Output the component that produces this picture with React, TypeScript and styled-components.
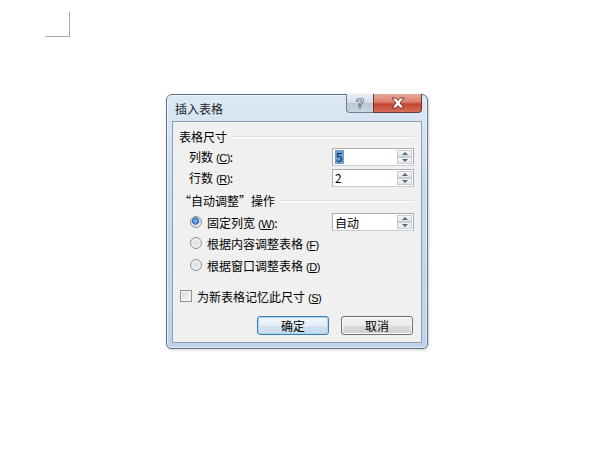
import styled, { createGlobalStyle } from "styled-components";

const GlobalStyle = createGlobalStyle`
  html, body {
    margin: 0;
    padding: 0;
    background: #ffffff;
  }
  body {
    font-family: "Noto Sans CJK SC", "Liberation Sans", sans-serif;
    font-size: 12px;
    color: #000;
  }
`;

function SpinBox({ value, selected }: { value: string; selected?: boolean }) {
  return (
    <Spin>
      <SpinText>{selected ? <Selected>{value}</Selected> : value}</SpinText>
      <SpinButtons>
        <SpinButton>
          <Arrow $dir="up" />
        </SpinButton>
        <SpinButton>
          <Arrow $dir="down" />
        </SpinButton>
      </SpinButtons>
    </Spin>
  );
}

function CloseGlyph() {
  return (
    <svg width="16" height="12" viewBox="0 0 16 12">
      <path
        d="M2 1 L6 1 L8 3.5 L10 1 L14 1 L10 6 L14 11 L10 11 L8 8.5 L6 11 L2 11 L6 6 Z"
        fill="#ffffff"
        stroke="#6b2a22"
        strokeWidth="0.9"
        strokeLinejoin="round"
      />
    </svg>
  );
}

export default function App() {
  return (
    <>
      <GlobalStyle />
      <Page>
        <CornerMark />
        <Window>
          <TitleBar>
            <Title>插入表格</Title>
            <Controls>
              <HelpButton>?</HelpButton>
              <CloseButton>
                <CloseGlyph />
              </CloseButton>
            </Controls>
          </TitleBar>
          <Client>
            <GroupHeader $h={20} $top={4}>
              表格尺寸
              <Rule />
            </GroupHeader>
            <FieldRow $h={21}>
              <Label>
                列数<Key>(<u>C</u>)</Key>:
              </Label>
              <SpinBox value="5" selected />
            </FieldRow>
            <FieldRow $h={21}>
              <Label>
                行数<Key>(<u>R</u>)</Key>:
              </Label>
              <SpinBox value="2" />
            </FieldRow>
            <GroupHeader $h={25}>
              “自动调整”操作
              <Rule />
            </GroupHeader>
            <FieldRow $h={18}>
              <Option>
                <Radio $checked />
                <span>
                  固定列宽<Key>(<u>W</u>)</Key>:
                </span>
              </Option>
              <SpinBox value="自动" />
            </FieldRow>
            <FieldRow $h={24}>
              <Option>
                <Radio />
                <span>
                  根据内容调整表格<Key>(<u>F</u>)</Key>
                </span>
              </Option>
            </FieldRow>
            <FieldRow $h={20}>
              <Option>
                <Radio />
                <span>
                  根据窗口调整表格<Key>(<u>D</u>)</Key>
                </span>
              </Option>
            </FieldRow>
            <CheckRow>
              <CheckBox />
              <span>
                为新表格记忆此尺寸<Key>(<u>S</u>)</Key>
              </span>
            </CheckRow>
            <ButtonRow>
              <PushButton $default>确定</PushButton>
              <PushButton>取消</PushButton>
            </ButtonRow>
          </Client>
        </Window>
      </Page>
    </>
  );
}

const Page = styled.div`
  position: relative;
  width: 600px;
  height: 450px;
  padding: 12px 0 0 45px;
  box-sizing: border-box;
  overflow: hidden;
`;

const CornerMark = styled.div`
  width: 24px;
  height: 24px;
  border-right: 1px solid #a8a8a8;
  border-bottom: 1px solid #a8a8a8;
`;

const Window = styled.div`
  position: absolute;
  left: 166px;
  top: 94px;
  width: 262px;
  height: 255px;
  box-sizing: border-box;
  display: flex;
  flex-direction: column;
  padding: 0 5px 5px 5px;
  border: 1px solid #5f7189;
  border-radius: 6px 6px 5px 5px;
  background: linear-gradient(180deg, #dce8f5 0%, #c8daee 40%, #bfd3ea 100%);
  box-shadow: inset 0 0 0 1px rgba(255, 255, 255, 0.55),
    1px 1px 3px rgba(0, 0, 0, 0.18);
`;

const TitleBar = styled.div`
  height: 26px;
  display: flex;
  align-items: center;
  justify-content: space-between;
`;

const Title = styled.span`
  margin-left: 3px;
  margin-top: 1px;
  font-size: 12px;
  color: #1e1e1e;
`;

const Controls = styled.div`
  align-self: flex-start;
  display: flex;
  margin-top: -1px;
`;

const HelpButton = styled.div`
  width: 27px;
  height: 19px;
  box-sizing: border-box;
  display: flex;
  align-items: center;
  justify-content: center;
  border: 1px solid #6f7f94;
  border-top: none;
  border-right: none;
  border-radius: 0 0 0 4px;
  background: linear-gradient(180deg, #e9eef4 0%, #d5dde7 50%, #b9c6d5 51%, #c9d5e2 100%);
  color: #ffffff;
  font-family: "Liberation Sans", sans-serif;
  font-size: 14px;
  font-weight: bold;
  -webkit-text-stroke: 0.7px #4a5a70;
`;

const CloseButton = styled.div`
  width: 49px;
  height: 19px;
  box-sizing: border-box;
  display: flex;
  align-items: center;
  justify-content: center;
  border: 1px solid #6a3a35;
  border-top: none;
  border-radius: 0 0 4px 0;
  background: linear-gradient(180deg, #e9a99c 0%, #dc7f6e 45%, #c6452f 55%, #d5705a 100%);
`;

const Client = styled.div`
  flex: 1;
  display: flex;
  flex-direction: column;
  padding: 0 7px 0 6px;
  border: 1px solid #8ea0b6;
  background: #f0f0f0;
`;

const GroupHeader = styled.div<{ $h: number; $top?: number }>`
  height: ${(p) => p.$h}px;
  margin-top: ${(p) => p.$top ?? 0}px;
  display: flex;
  align-items: center;
  gap: 5px;
  color: #000;
`;

const Rule = styled.div`
  flex: 1;
  height: 1px;
  background: #d5dfe5;
  box-shadow: 0 1px 0 #ffffff;
`;

const FieldRow = styled.div<{ $h: number }>`
  height: ${(p) => p.$h}px;
  display: flex;
  align-items: center;
  justify-content: space-between;
`;

const Label = styled.span`
  padding-left: 10px;
`;

const Key = styled.span`
  margin-left: 3px;
  font-family: "Liberation Sans", sans-serif;
  font-size: 11px;
  letter-spacing: -0.5px;
`;

const Option = styled.span`
  display: flex;
  align-items: center;
  gap: 5px;
  padding-left: 11px;
`;

const Radio = styled.span<{ $checked?: boolean }>`
  width: 12px;
  height: 12px;
  box-sizing: border-box;
  border-radius: 50%;
  border: 1px solid #8e8f8f;
  background: ${(p) =>
    p.$checked
      ? "radial-gradient(circle at 45% 40%, #8cc3f0 0%, #2d6fb5 42%, #d9dee4 48%, #f5f5f5 100%)"
      : "radial-gradient(circle at 50% 50%, #dcdcdc 0%, #eeeeee 55%, #f9f9f9 100%)"};
`;

const CheckRow = styled.div`
  height: 20px;
  margin-top: 11px;
  display: flex;
  align-items: center;
  gap: 5px;
  padding-left: 1px;
`;

const CheckBox = styled.span`
  width: 12px;
  height: 12px;
  box-sizing: border-box;
  border: 1px solid #8f8f8f;
  background: linear-gradient(135deg, #d8d8d8 0%, #ececec 60%, #f7f7f7 100%);
  box-shadow: inset 0 0 0 1px #f4f4f4;
`;

const ButtonRow = styled.div`
  margin-top: 10px;
  display: flex;
  justify-content: flex-end;
  gap: 12px;
  padding-right: 1px;
`;

const PushButton = styled.div<{ $default?: boolean }>`
  width: 72px;
  height: 19px;
  box-sizing: border-box;
  display: flex;
  align-items: center;
  justify-content: center;
  border: 1px solid ${(p) => (p.$default ? "#3c7fb1" : "#707070")};
  border-radius: 3px;
  background: ${(p) =>
    p.$default
      ? "linear-gradient(180deg, #f2f7fb 0%, #e5eff7 50%, #d2e3f1 51%, #c9dcec 100%)"
      : "linear-gradient(180deg, #f2f2f2 0%, #ebebeb 50%, #dddddd 51%, #cfcfcf 100%)"};
  box-shadow: inset 0 0 0 1px ${(p) => (p.$default ? "#a8d8f0" : "#fbfbfb")};
  color: #000;
`;

const Spin = styled.div`
  width: 82px;
  height: 18px;
  box-sizing: border-box;
  display: flex;
  border: 1px solid #abadb3;
  border-bottom-color: #c9ccd2;
  background: #ffffff;
`;

const SpinText = styled.div`
  flex: 1;
  display: flex;
  align-items: center;
  padding-left: 2px;
  font-size: 12px;
`;

const Selected = styled.span`
  background: #6c9fd8;
  color: #0d1f4a;
  padding: 0 1px;
  line-height: 14px;
`;

const SpinButtons = styled.div`
  width: 15px;
  display: flex;
  flex-direction: column;
  padding: 1px;
`;

const SpinButton = styled.div`
  flex: 1;
  display: flex;
  align-items: center;
  justify-content: center;
  border: 1px solid #c7cdd5;
  background: linear-gradient(180deg, #f6f6f6 0%, #e2e5e9 100%);
`;

const Arrow = styled.span<{ $dir: "up" | "down" }>`
  width: 0;
  height: 0;
  border-left: 3px solid transparent;
  border-right: 3px solid transparent;
  ${(p) =>
    p.$dir === "up"
      ? "border-bottom: 3px solid #56657c;"
      : "border-top: 3px solid #56657c;"}
`;
